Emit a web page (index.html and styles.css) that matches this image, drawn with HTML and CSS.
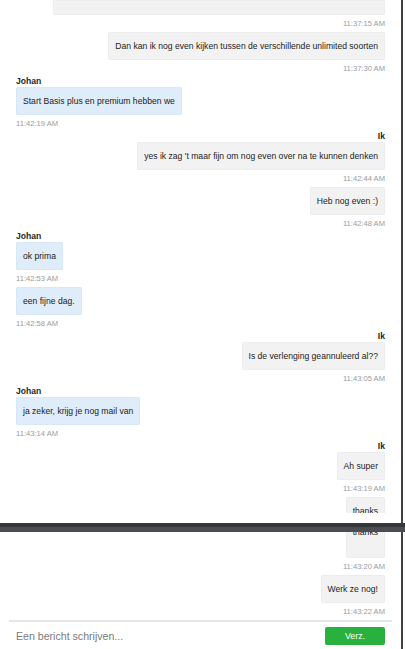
FILE: index.html
```html
<!DOCTYPE html>
<html lang="nl">
<head>
<meta charset="utf-8">
<title>Chat</title>
<link rel="stylesheet" href="styles.css">
</head>
<body>
<div class="frame frame-top">
  <div class="chat">
    <div class="msg me">
      <div class="bubble bubble-cut"></div>
      <div class="ts">11:37:15 AM</div>
    </div>
    <div class="msg me">
      <div class="bubble">Dan kan ik nog even kijken tussen de verschillende unlimited soorten</div>
      <div class="ts">11:37:30 AM</div>
    </div>
    <div class="msg them">
      <div class="name">Johan</div>
      <div class="bubble">Start Basis plus en premium hebben we</div>
      <div class="ts">11:42:19 AM</div>
    </div>
    <div class="msg me">
      <div class="name">Ik</div>
      <div class="bubble">yes ik zag 't maar fijn om nog even over na te kunnen denken</div>
      <div class="ts">11:42:44 AM</div>
    </div>
    <div class="msg me">
      <div class="bubble">Heb nog even :)</div>
      <div class="ts">11:42:48 AM</div>
    </div>
    <div class="msg them">
      <div class="name">Johan</div>
      <div class="bubble">ok prima</div>
      <div class="ts">11:42:53 AM</div>
    </div>
    <div class="msg them">
      <div class="bubble">een fijne dag.</div>
      <div class="ts">11:42:58 AM</div>
    </div>
    <div class="msg me">
      <div class="name">Ik</div>
      <div class="bubble">Is de verlenging geannuleerd al??</div>
      <div class="ts">11:43:05 AM</div>
    </div>
    <div class="msg them">
      <div class="name">Johan</div>
      <div class="bubble">ja zeker, krijg je nog mail van</div>
      <div class="ts">11:43:14 AM</div>
    </div>
    <div class="msg me">
      <div class="name">Ik</div>
      <div class="bubble">Ah super</div>
      <div class="ts">11:43:19 AM</div>
    </div>
    <div class="msg me">
      <div class="bubble bubble-tall">thanks<br>&nbsp;</div>
      <div class="ts">11:43:20 AM</div>
    </div>
  </div>
</div>
<div class="divider"></div>
<div class="frame frame-bottom">
  <div class="chat chat-end">
    <div class="msg me">
      <div class="bubble bubble-tall">thanks<br>&nbsp;</div>
      <div class="ts">11:43:20 AM</div>
    </div>
    <div class="msg me">
      <div class="bubble">Werk ze nog!</div>
      <div class="ts">11:43:22 AM</div>
    </div>
  </div>
  <form class="composer">
    <input class="composer-input" type="text" placeholder="Een bericht schrijven...">
    <button class="send" type="button">Verz.</button>
  </form>
</div>
</body>
</html>
```
FILE: styles.css
```css
html, body {
  margin: 0;
  padding: 0;
  background: #ffffff;
}

body {
  font-family: "Liberation Sans", Arial, Helvetica, sans-serif;
  color: #222222;
  width: 405px;
}

.frame {
  width: 401px;
  border-right: 2px solid #3e4144;
  background: #ffffff;
  box-sizing: content-box;
}

.frame-top {
  height: 523px;
}

.frame-top .chat {
  height: 513px;
}

.frame-bottom {
  height: 117px;
  display: flex;
  flex-direction: column;
}

.chat {
  display: flex;
  flex-direction: column;
  overflow: hidden;
  padding: 0 16px;
}

.chat-end {
  height: 88px;
  justify-content: flex-end;
  flex: none;
}

.msg {
  display: flex;
  flex-direction: column;
  flex: none;
}

.msg.me {
  align-items: flex-end;
}

.msg.them {
  align-items: flex-start;
}

.name {
  font-size: 8.6px;
  font-weight: bold;
  line-height: 9px;
  height: 9px;
  margin: 0 0 1px;
  color: #1f1f1f;
}

.bubble {
  font-size: 8.6px;
  line-height: 12px;
  padding: 8px 7px;
  border-radius: 2px;
  white-space: nowrap;
  box-sizing: border-box;
  height: 28px;
  flex: none;
}

.bubble-tall {
  height: 40px;
}

.me .bubble {
  background: #f2f2f2;
  box-shadow: inset 0 0 0 1px #ececec;
}

.them .bubble {
  background: #deedf9;
  box-shadow: inset 0 0 0 1px #d6e7f5;
}

.bubble-cut {
  height: 15px;
  width: 332px;
  padding: 0;
}

.ts {
  font-size: 7.6px;
  line-height: 10px;
  height: 10px;
  margin: 4px 0 3px;
  color: #9b9b9b;
  flex: none;
}

.divider {
  height: 9px;
  width: 405px;
  background: linear-gradient(#35383b 0, #35383b 4px, #4b4e51 4px, #4b4e51 9px);
}

.composer {
  display: flex;
  align-items: center;
  justify-content: space-between;
  margin: 0 9px;
  padding: 0 7px;
  border-top: 2px solid #e2e5e9;
  height: 27px;
  flex: none;
}

.composer-input {
  border: none;
  outline: none;
  background: transparent;
  font-family: "Liberation Sans", Arial, Helvetica, sans-serif;
  font-size: 10.6px;
  padding: 0;
  margin: 0;
  width: 220px;
  color: #333333;
}

.composer-input::placeholder {
  color: #7a7a7a;
}

.send {
  width: 60px;
  height: 18px;
  border: none;
  border-radius: 2px;
  background: #28b13e;
  color: #ffffff;
  font-family: "Liberation Sans", Arial, Helvetica, sans-serif;
  font-size: 8.8px;
  padding: 0;
  margin: 0;
}
```
